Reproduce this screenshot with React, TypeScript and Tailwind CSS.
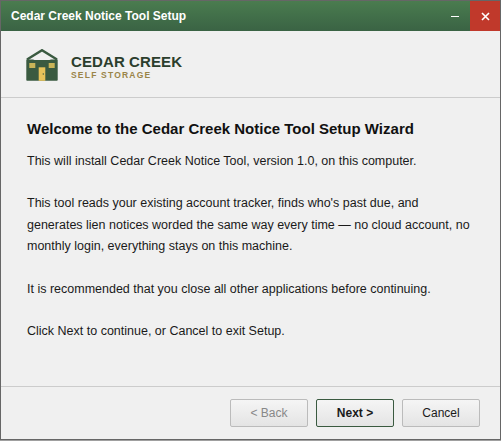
export default function App() {
  return (
    <div className="flex h-[441px] w-[501px] flex-col bg-[#a0a0a0] font-['Liberation_Sans',Arial,sans-serif]">
      <div className="flex h-[440px] flex-col border border-[#666666] bg-[#f0f0f0]">
        {/* title bar */}
        <div className="flex h-[30px] shrink-0 items-center justify-between bg-gradient-to-b from-[#4a7c4f] to-[#3a6344] pl-[10px]">
          <span className="text-[12px] font-bold text-white">Cedar Creek Notice Tool Setup</span>
          <div className="flex h-full">
            <button className="flex h-full w-[30px] items-center justify-center pt-[2px] text-white">
              <svg width="8" height="2" viewBox="0 0 8 2">
                <rect width="8" height="1" fill="#fff" />
              </svg>
            </button>
            <button className="flex h-full w-[30px] items-center justify-center bg-[#c0392b] pt-[1px] text-white">
              <svg width="9" height="9" viewBox="0 0 9 9">
                <path d="M1 1l7 7M8 1L1 8" stroke="#fff" strokeWidth="1.6" />
              </svg>
            </button>
          </div>
        </div>

        {/* logo header */}
        <div className="flex h-[67px] shrink-0 items-center gap-[13px] border-b border-[#cccccc] pl-[25px]">
          <svg width="32" height="32" viewBox="0 0 32 32" className="mt-[2px]">
            <path d="M1 10.500L16 1.200L31 10.500" fill="none" stroke="#3a5a40" strokeWidth="2.400" />
            <path d="M0.300 10.500h31.400V31a.8 .8 0 0 1-.8 .8H1.100a.8 .8 0 0 1-.8-.8z" fill="#3a5a40" />
            <path d="M7 11L16 5L25 11z" fill="#f0f0f0" />
            <rect x="3.300" y="14" width="6" height="5" fill="#c9b458" />
            <rect x="22.700" y="14" width="6" height="5" fill="#c9b458" />
            <rect x="12.700" y="18.300" width="6.600" height="13.500" fill="#e8c35a" />
            <circle cx="17.300" cy="25" r=".7" fill="#3a5a40" />
          </svg>
          <div className="mt-[5px] flex flex-col">
            <span className="text-[15px] font-bold leading-[17px] tracking-[0.1px] text-[#2c3e2d]">CEDAR CREEK</span>
            <span className="text-[8.5px] font-bold leading-[11px] tracking-[1.2px] text-[#9a8448]">SELF STORAGE</span>
          </div>
        </div>

        {/* body */}
        <div className="flex-1 px-[26px] pt-[22px] text-[12.5px] leading-[21.45px] text-[#1a1a1a]">
          <h1 className="mb-[13px] text-[15px] font-bold leading-[18px] text-[#111111]">
            Welcome to the Cedar Creek Notice Tool Setup Wizard
          </h1>
          <p className="mb-[21px]">This will install Cedar Creek Notice Tool, version 1.0, on this computer.</p>
          <p className="mb-[21px]">
            This tool reads your existing account tracker, finds who's past due, and generates lien notices worded the
            same way every time — no cloud account, no monthly login, everything stays on this machine.
          </p>
          <p className="mb-[21px]">It is recommended that you close all other applications before continuing.</p>
          <p>Click Next to continue, or Cancel to exit Setup.</p>
        </div>

        {/* footer */}
        <div className="flex h-[53px] shrink-0 items-center justify-end gap-[8px] border-t border-[#cccccc] pr-[20px]">
          <button
            disabled
            className="h-[28px] w-[78px] rounded-[2px] border border-[#bbbbbb] bg-gradient-to-b from-[#f5f5f5] to-[#e4e4e4] text-[12px] text-[#888888]"
          >
            &lt; Back
          </button>
          <button className="h-[28px] w-[78px] rounded-[2px] border border-[#3a5a40] bg-gradient-to-b from-[#f5f5f5] to-[#e4e4e4] text-[12px] font-bold text-[#1a1a1a]">
            Next &gt;
          </button>
          <button className="h-[28px] w-[78px] rounded-[2px] border border-[#bbbbbb] bg-gradient-to-b from-[#f5f5f5] to-[#e4e4e4] text-[12px] text-[#1a1a1a]">
            Cancel
          </button>
        </div>
      </div>
    </div>
  );
}
